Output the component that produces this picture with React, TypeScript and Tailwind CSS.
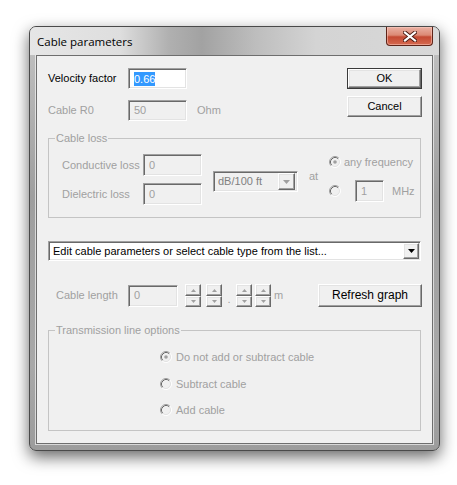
import React from "react";

const sunkenBase =
  "box-border flex items-center pl-[4px] border border-t-[#a0a0a0] border-l-[#a0a0a0] border-r-white border-b-white shadow-[inset_1px_1px_0_#696969,inset_-1px_-1px_0_#e3e3e3]";
const raisedBase =
  "box-border border border-t-white border-l-white border-r-[#696969] border-b-[#696969] shadow-[inset_-1px_-1px_0_#a0a0a0,inset_1px_1px_0_#e3e3e3] bg-[#f0f0f0]";

function Field({ cls, text, enabled }: { cls: string; text: React.ReactNode; enabled?: boolean }) {
  return (
    <div className={`${sunkenBase} ${cls} ${enabled ? "bg-white text-black" : "bg-[#f0f0f0] text-[#a0a0a0]"}`}>
      {text}
    </div>
  );
}

function Tri({ up, color }: { up?: boolean; color: string }) {
  return (
    <svg width="7" height="4" viewBox="0 0 7 4">
      {up ? <polygon points="0,4 7,4 3.5,0" fill={color} /> : <polygon points="0,0 7,0 3.5,4" fill={color} />}
    </svg>
  );
}

function Radio({ checked }: { checked?: boolean }) {
  return (
    <svg width="12" height="12" viewBox="0 0 12 12" className="shrink-0">
      <circle cx="6" cy="6" r="5" fill="#f0f0f0" />
      <path d="M2.11 9.89 A5.5 5.5 0 0 1 9.89 2.11" stroke="#a0a0a0" fill="none" />
      <path d="M2.82 9.18 A4.5 4.5 0 0 1 9.18 2.82" stroke="#696969" fill="none" />
      <path d="M9.89 2.11 A5.5 5.5 0 0 1 2.11 9.89" stroke="#ffffff" fill="none" />
      <path d="M9.18 2.82 A4.5 4.5 0 0 1 2.82 9.18" stroke="#e3e3e3" fill="none" />
      {checked && <circle cx="6" cy="6" r="1.8" fill="#a0a0a0" />}
    </svg>
  );
}

function Spinner() {
  return (
    <div className="flex flex-col w-[16px] h-[23px]">
      <div className={`${raisedBase} h-[12px] flex items-center justify-center`}>
        <svg width="5" height="3" viewBox="0 0 5 3"><polygon points="0,3 5,3 2.5,0" fill="#a0a0a0" /></svg>
      </div>
      <div className={`${raisedBase} h-[11px] flex items-center justify-center`}>
        <svg width="5" height="3" viewBox="0 0 5 3"><polygon points="0,0 5,0 2.5,3" fill="#a0a0a0" /></svg>
      </div>
    </div>
  );
}

function Group({ label, cls, children }: { label: string; cls: string; children: React.ReactNode }) {
  return (
    <div className={`relative box-border border border-[#c4c4c4] ${cls}`}>
      <span className="absolute left-[6px] -top-[8px] px-[1px] bg-[#f0f0f0] text-[#a0a0a0] leading-[14px]">{label}</span>
      {children}
    </div>
  );
}

export default function App() {
  return (
    <div className="w-[457px] h-[485px] bg-white overflow-hidden pt-[26px] pl-[29px] font-['Liberation_Sans',Arial,sans-serif] text-[11px]">
      <div className="relative box-border w-[411px] h-[425px] rounded-[7px] border border-[#4a4a4a] bg-[linear-gradient(180deg,#c4c4c4_0%,#9e9e9e_40%,#a8a8a8_80%,#9c9c9c_100%)] shadow-[0_6px_16px_rgba(0,0,0,0.6)] flex flex-col">
        {/* title bar */}
        <div className="h-[28px] shrink-0 rounded-t-[6px] flex items-start relative bg-[linear-gradient(90deg,#e6e6e6_0%,#dedede_22%,#b0b0b0_34%,#a2a2a2_42%,#bdbdbd_55%,#d4d4d4_70%,#d8d8d8_100%)]">
          <div className="pl-[7px] pt-[8px] text-[11.5px] leading-[14px] text-black font-['Open_Sans','Noto_Sans',sans-serif]">Cable parameters</div>
          <div className="ml-auto mr-[6px] w-[47px] h-[19px] box-border border border-t-0 border-[#5e2418] rounded-b-[4px] bg-[linear-gradient(180deg,#eab1a3_0%,#dc8a75_45%,#c44a33_55%,#d56a50_100%)] shadow-[inset_0_0_0_1px_rgba(255,210,200,0.5)] flex items-center justify-center">
            <svg width="14" height="11" viewBox="0 0 14 11">
              <path d="M2 1.5 L12 9.5 M12 1.5 L2 9.5" stroke="#4a1a10" strokeWidth="4" strokeLinecap="square" />
              <path d="M2 1.5 L12 9.5 M12 1.5 L2 9.5" stroke="#ffffff" strokeWidth="2.2" strokeLinecap="square" />
            </svg>
          </div>
        </div>
        {/* frame + client */}
        <div className="flex-1 px-[6px] pb-[6px] pt-[0px]">
          <div className="box-border w-[397px] h-[389px] border border-[#6e6e6e] shadow-[0_0_0_1px_rgba(255,255,255,0.6)] bg-[#f0f0f0] px-[11px] pt-[12px] text-black leading-[13px]">
            {/* top section */}
            <div className="flex justify-between">
              <div className="flex flex-col">
                <div className="flex items-center h-[21px]">
                  <div className="w-[80px]">Velocity factor</div>
                  <Field
                    enabled
                    cls="w-[59px] h-[21px] pl-[5px]"
                    text={<span className="bg-[#3399ff] text-white px-[0px] leading-[14px]">0.66</span>}
                  />
                </div>
                <div className="flex items-center h-[21px] mt-[11px]">
                  <div className="w-[80px] text-[#a0a0a0]">Cable R0</div>
                  <Field cls="w-[59px] h-[21px] pl-[5px]" text="50" />
                  <div className="ml-[10px] text-[#a0a0a0]">Ohm</div>
                </div>
              </div>
              <div className="flex flex-col gap-[7px] mr-[-1px]">
                <div className="box-border w-[75px] h-[21px] border border-[#3a3a3a]">
                  <div className={`${raisedBase} w-full h-full flex items-center justify-center`}>OK</div>
                </div>
                <div className={`${raisedBase} w-[75px] h-[21px] flex items-center justify-center`}>Cancel</div>
              </div>
            </div>

            {/* cable loss */}
            <Group label="Cable loss" cls="mt-[17px] h-[80px] pl-[13px] pt-[15px]">
              <div className="flex items-start">
                <div className="flex flex-col gap-[7px]">
                  <div className="flex items-center h-[22px]">
                    <div className="w-[81px] text-[#a0a0a0]">Conductive loss</div>
                    <Field cls="w-[59px] h-[22px] pl-[5px]" text="0" />
                  </div>
                  <div className="flex items-center h-[22px]">
                    <div className="w-[81px] text-[#a0a0a0]">Dielectric loss</div>
                    <Field cls="w-[59px] h-[22px] pl-[5px]" text="0" />
                  </div>
                </div>
                <div className={`${sunkenBase} ml-[11px] mt-[17px] w-[85px] h-[21px] bg-[#f0f0f0] text-[#808080] pl-[3px] pr-[2px]`}>
                  <span className="flex-1">dB/100 ft</span>
                  <div className={`${raisedBase} w-[17px] h-[17px] flex items-center justify-center`}>
                    <Tri color="#a0a0a0" />
                  </div>
                </div>
                <div className="w-[20px] ml-[11px] mt-[16px] text-[#a0a0a0]">at</div>
                <div className="flex flex-col">
                  <div className="flex items-center h-[16px]">
                    <Radio checked />
                    <span className="ml-[3px] text-[#a0a0a0]">any frequency</span>
                  </div>
                  <div className="flex items-center h-[22px] mt-[10px]">
                    <Radio />
                    <Field cls="ml-[14px] w-[29px] h-[22px] pl-[5px]" text="1" />
                    <span className="ml-[8px] text-[#a0a0a0]">MHz</span>
                  </div>
                </div>
              </div>
            </Group>

            {/* cable type combo */}
            <div className={`${sunkenBase} mt-[23px] h-[20px] bg-white text-black pl-[2px] pr-[1px]`}>
              <span className="flex-1">Edit cable parameters or select cable type from the list...</span>
              <div className={`${raisedBase} w-[16px] h-[16px] flex items-center justify-center`}>
                <Tri color="#000000" />
              </div>
            </div>

            {/* cable length row */}
            <div className="flex items-center mt-[23px] h-[23px]">
              <div className="pl-[8px] w-[80px] text-[#a0a0a0]">Cable length</div>
              <Field cls="w-[50px] h-[22px] pl-[5px]" text="0" />
              <div className="ml-[7px]"><Spinner /></div>
              <div className="ml-[5px]"><Spinner /></div>
              <div className="w-[14px] text-center text-[#a0a0a0] self-end leading-[16px]">.</div>
              <Spinner />
              <div className="ml-[3px]"><Spinner /></div>
              <span className="ml-[3px] text-[#a0a0a0]">m</span>
              <div className={`${raisedBase} ml-auto mr-[-1px] w-[104px] h-[23px] flex items-center justify-center text-[12px]`}>Refresh graph</div>
            </div>

            {/* transmission line options */}
            <Group label="Transmission line options" cls="mt-[23px] h-[101px] pl-[111px] pt-[19px]">
              <div className="flex flex-col">
                <div className="flex items-center h-[14px]">
                  <Radio checked />
                  <span className="ml-[4px] text-[#a0a0a0]">Do not add or subtract cable</span>
                </div>
                <div className="flex items-center h-[14px] mt-[13px]">
                  <Radio />
                  <span className="ml-[4px] text-[#a0a0a0]">Subtract cable</span>
                </div>
                <div className="flex items-center h-[14px] mt-[12px]">
                  <Radio />
                  <span className="ml-[4px] text-[#a0a0a0]">Add cable</span>
                </div>
              </div>
            </Group>
          </div>
        </div>
      </div>
    </div>
  );
}
